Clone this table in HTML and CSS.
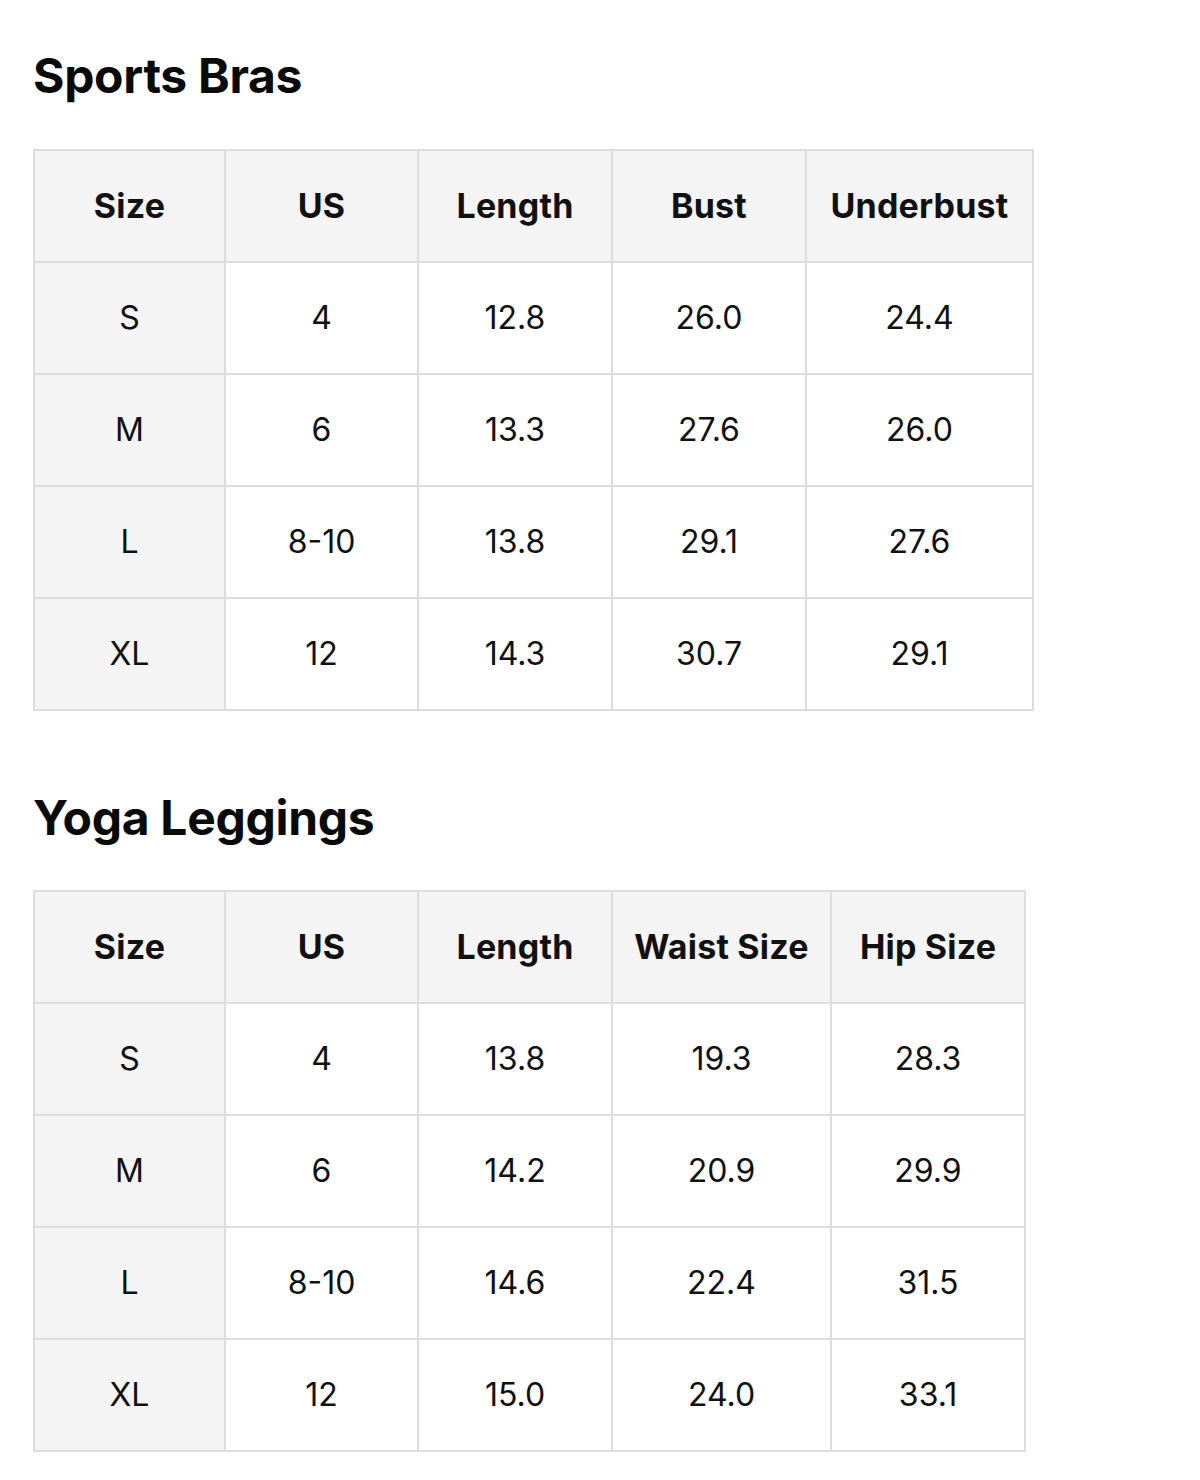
FILE: index.html
```html
<!DOCTYPE html>
<html lang="en">
<head>
<meta charset="utf-8">
<title>Size Chart</title>
<link rel="stylesheet" href="styles.css">
</head>
<body>
<main class="page">
  <section class="chart">
    <h2 class="chart-title">Sports Bras</h2>
    <table class="size-table bras">
      <thead>
        <tr><th>Size</th><th>US</th><th>Length</th><th>Bust</th><th>Underbust</th></tr>
      </thead>
      <tbody>
        <tr><th>S</th><td>4</td><td>12.8</td><td>26.0</td><td>24.4</td></tr>
        <tr><th>M</th><td>6</td><td>13.3</td><td>27.6</td><td>26.0</td></tr>
        <tr><th>L</th><td>8-10</td><td>13.8</td><td>29.1</td><td>27.6</td></tr>
        <tr><th>XL</th><td>12</td><td>14.3</td><td>30.7</td><td>29.1</td></tr>
      </tbody>
    </table>
  </section>
  <section class="chart">
    <h2 class="chart-title">Yoga Leggings</h2>
    <table class="size-table leggings">
      <thead>
        <tr><th>Size</th><th>US</th><th>Length</th><th>Waist Size</th><th>Hip Size</th></tr>
      </thead>
      <tbody>
        <tr><th>S</th><td>4</td><td>13.8</td><td>19.3</td><td>28.3</td></tr>
        <tr><th>M</th><td>6</td><td>14.2</td><td>20.9</td><td>29.9</td></tr>
        <tr><th>L</th><td>8-10</td><td>14.6</td><td>22.4</td><td>31.5</td></tr>
        <tr><th>XL</th><td>12</td><td>15.0</td><td>24.0</td><td>33.1</td></tr>
      </tbody>
    </table>
  </section>
</main>
</body>
</html>
```
FILE: styles.css
```css
html, body {
  margin: 0;
  padding: 0;
  background: #ffffff;
}
body {
  font-family: Inter, "Noto Sans", "Liberation Sans", sans-serif;
  color: #111111;
}
.page {
  padding: 42px 33px 0 33px;
}
.chart-title {
  margin: 0;
  font-size: 48px;
  font-weight: 750;
  line-height: 68px;
  letter-spacing: -0.3px;
  color: #0a0a0a;
}
.chart + .chart {
  margin-top: 73px;
}
.size-table {
  margin-top: 39px;
  border-collapse: collapse;
  table-layout: fixed;
  border: 2px solid #dddddd;
}
.leggings {
  margin-top: 38px;
}
.size-table th,
.size-table td {
  border: 2px solid #dddddd;
  height: 110px;
  padding: 0;
  text-align: center;
  vertical-align: middle;
  font-size: 32px;
  line-height: 1;
}
.size-table th {
  font-weight: 400;
  background: #f4f4f4;
}
.size-table thead th {
  font-weight: 700;
  font-size: 34px;
  letter-spacing: 0.2px;
}
.size-table td {
  background: #ffffff;
}
.bras { width: 999px; }
.leggings { width: 991px; }
.size-table th:nth-child(1) { width: 189px; }
.size-table th:nth-child(2) { width: 191px; }
.size-table th:nth-child(3) { width: 192px; }
.bras th:nth-child(4) { width: 192px; }
.bras th:nth-child(5) { width: 225px; }
.leggings th:nth-child(4) { width: 217px; }
.leggings th:nth-child(5) { width: 192px; }
```
